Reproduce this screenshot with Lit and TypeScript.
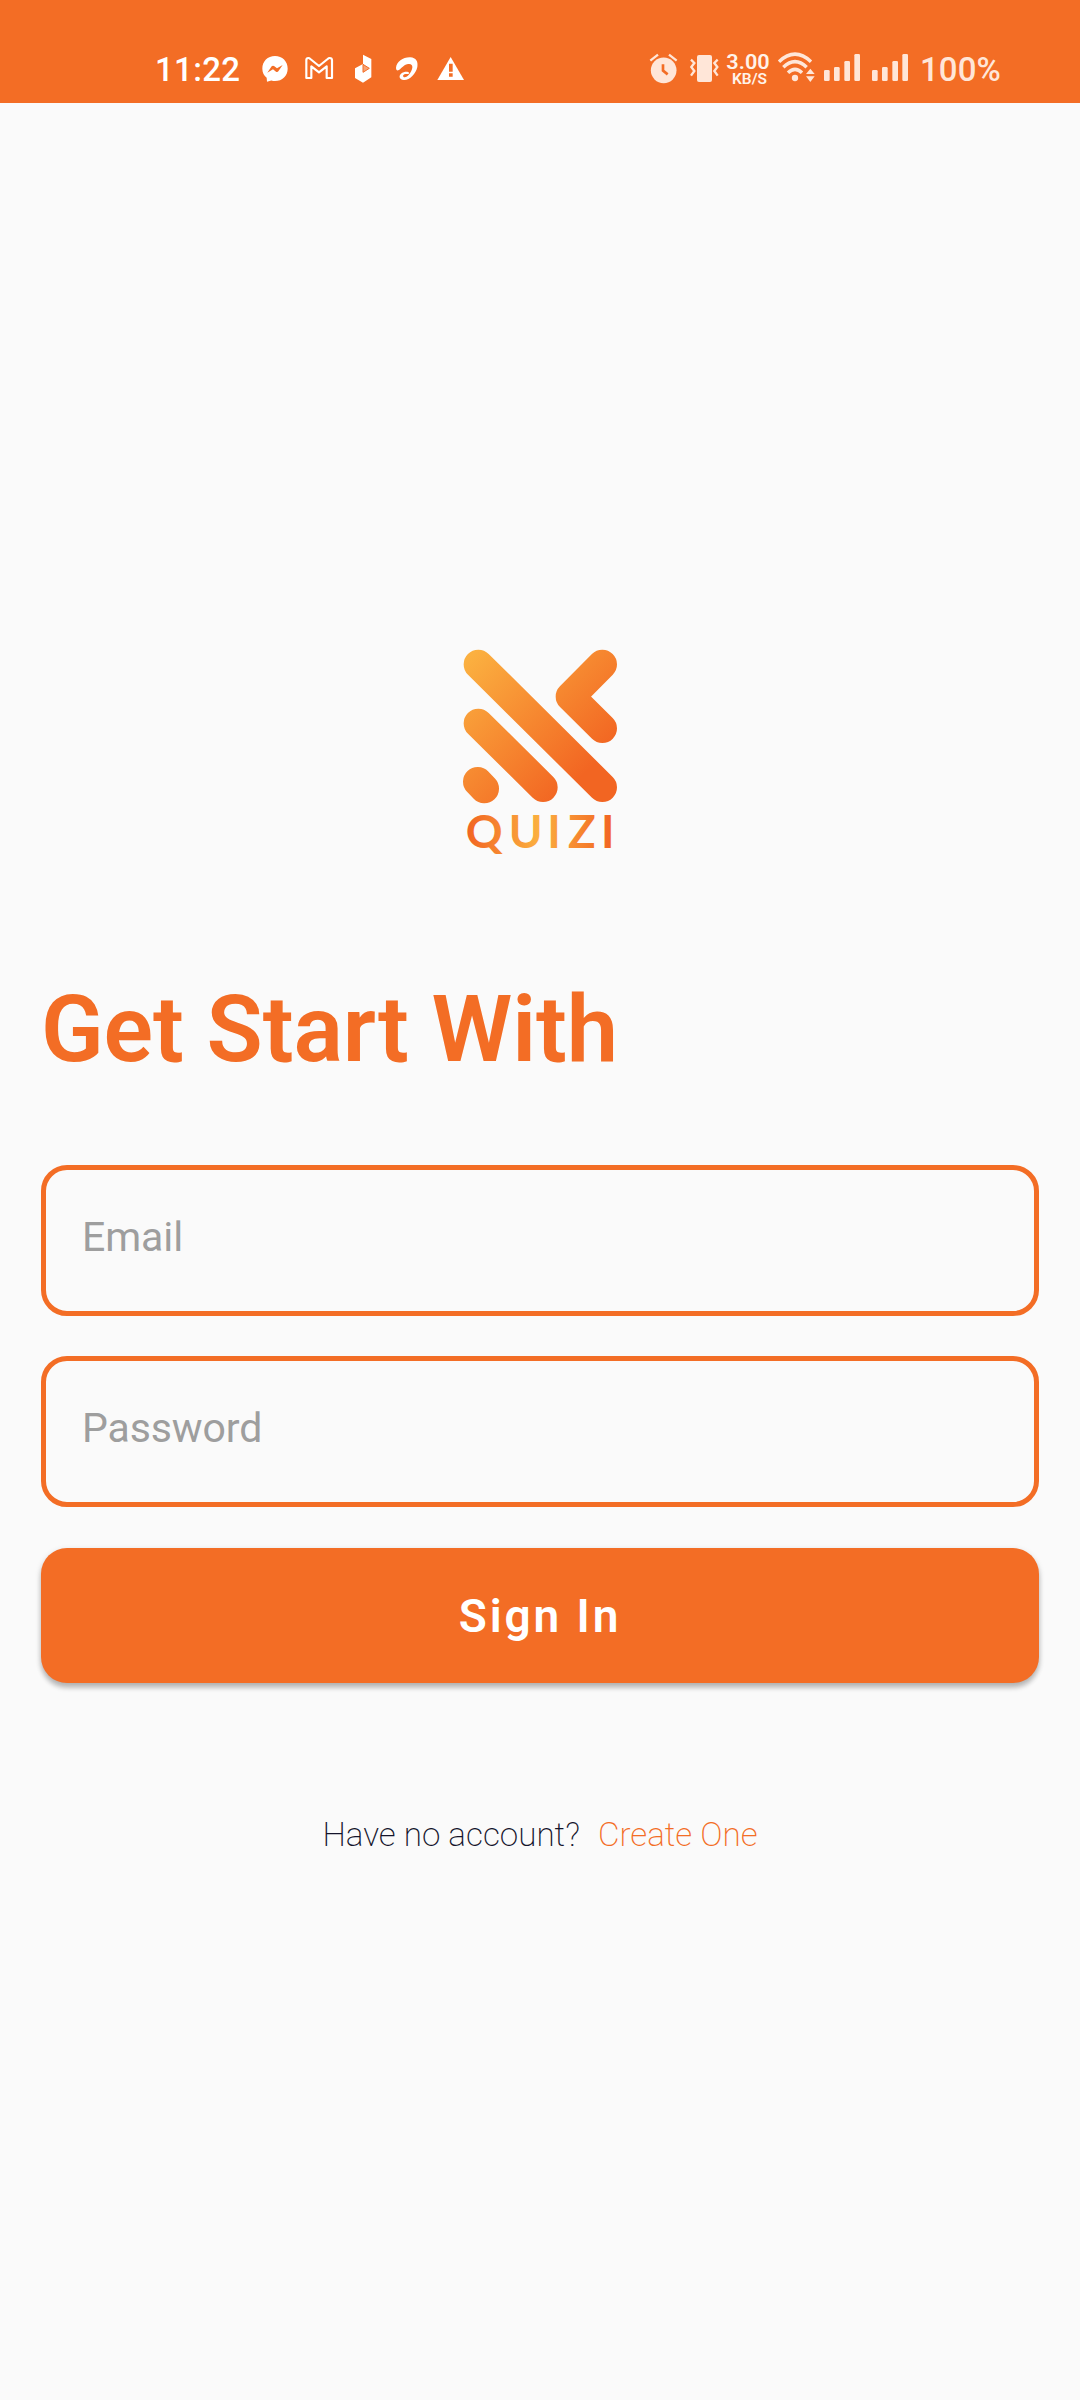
import { LitElement, html, css } from "lit";
import { customElement, property } from "lit/decorators.js";

@customElement("status-bar")
class StatusBar extends LitElement {
  static styles = css`
    :host {
      display: flex;
      justify-content: space-between;
      box-sizing: border-box;
      height: 103px;
      padding: 52px 79px 0 155px;
      background: #f36d25;
      color: #fff;
      font-family: Roboto, sans-serif;
    }
    .side { display: flex; align-items: flex-start; }
    .right { color: #ffe6d8; }
    svg { display: block; height: 32px; flex: none; fill: currentColor; overflow: visible; }
    .time, .battery { font-size: 33px; line-height: 36px; white-space: nowrap; }
    .time { width: 106px; font-weight: 500; letter-spacing: 0.35px; }
    .battery { width: 81px; margin-left: 11px; font-weight: 500; letter-spacing: 0.1px; }
    .messenger { width: 28px; }
    .gmail { width: 30px; margin-left: 15px; }
    .cube { width: 20px; margin-left: 19px; }
    .swirl { width: 24px; margin-left: 22px; }
    .warn { width: 28px; margin-left: 18px; }
    .alarm { width: 30px; }
    .vibrate { width: 29px; margin-left: 11px; }
    .speed { width: 44px; margin-left: 7px; color: #fff3ea; font-family: Roboto, sans-serif; font-weight: 600; }
    .wifi { width: 39px; margin-left: 7px; }
    .signal { width: 37px; margin-left: 8px; }
    .signal + .signal { margin-left: 11px; }
  `;

  private bars() {
    return html`<svg class="signal" viewBox="12 36 111 96">
      <rect x="12" y="90" width="17" height="33" rx="4" />
      <rect x="42" y="81" width="17" height="42" rx="4" />
      <rect x="73" y="63" width="17" height="60" rx="4" />
      <rect x="103" y="42" width="17" height="81" rx="4" />
    </svg>`;
  }

  render() {
    return html`
      <div class="side">
        <span class="time">11:22</span>
        <svg class="messenger" viewBox="363 36 84 96">
          <path fill-rule="evenodd" d="M405 48C383 48 367 64 367 86C367 98 372 107 380 113L381 125L394 121.500C398 123 401 123 405 123C427 123 443 107 443 86C443 64 427 48 405 48ZM382 98L395 79Q398 76 402 78L411 85L428 75L415 94Q412 98 408 95L399 88Z" />
        </svg>
        <svg class="gmail" viewBox="492 36 90 96">
          <path fill="none" stroke="currentColor" stroke-width="6.500" stroke-linejoin="round" d="M499 114V60Q499 54 505 54Q508 54 511 57L537 78L563 57Q566 54 569 54Q576 54 576 61V114H560V79L537 97L514 79V114Z" />
        </svg>
        <svg class="cube" viewBox="639 36 60 96">
          <path d="M669 44L694 57V112L669 128L645 114V85L669 72Z" />
          <path d="M669 73V97L688 85Z" fill="#f8a273" stroke="#f36d25" stroke-width="3" />
        </svg>
        <svg class="swirl" viewBox="765 36 72 96">
          <path d="M768 83C770 64 790 51 811 52C828 53 835 65 832 81C828 102 807 122 791 120C779 119 775 108 783 101C791 95 804 94 807 98C809 101 804 103 799 102C792 101 787 106 790 110C798 117 814 99 817 83C818 73 811 70 801 73C788 77 784 87 775 91C770 92 768 88 768 83Z" />
        </svg>
        <svg class="warn" viewBox="891 36 84 96">
          <path d="M932 51L972 120H892Z" />
          <path d="M927 71H938V95H927ZM927 100H938V110H927Z" fill="#f36d25" />
        </svg>
      </div>
      <div class="side right">
        <svg class="alarm" viewBox="27 36 90 96">
          <circle cx="71" cy="91" r="38.500" />
          <path d="M31 62L54 44M110 62L87 44" stroke="currentColor" stroke-width="7" />
          <path d="M69 73V92L83 103" fill="none" stroke="#f36d25" stroke-width="8" />
        </svg>
        <svg class="vibrate" viewBox="150 36 87 96">
          <rect x="171" y="45" width="45" height="81" rx="6" />
          <path d="M153 59L163 69L154 81L163 93L153 107M233 59L223 69L232 81L223 93L233 107" fill="none" stroke="currentColor" stroke-width="7" />
        </svg>
        <svg class="speed" viewBox="258 36 132 96">
          <text x="259" y="86" font-size="61" textLength="130" lengthAdjust="spacingAndGlyphs">3.00</text>
          <text x="276" y="132" font-size="45" textLength="105" lengthAdjust="spacingAndGlyphs">KB/S</text>
        </svg>
        <svg class="wifi" viewBox="411 36 117 96">
          <path d="M417 65Q465 20 513 65M430 82Q465 48 500 82M444 98Q465 78 486 98" fill="none" stroke="currentColor" stroke-width="10.500" />
          <circle cx="465" cy="114" r="9.500" />
          <path d="M511 86L524 102H498ZM498 109H524L511 126Z" />
        </svg>
        ${this.bars()}${this.bars()}
        <span class="battery">100%</span>
      </div>
    `;
  }
}

@customElement("quizi-logo")
class QuiziLogo extends LitElement {
  static styles = css`
    :host { display: block; width: 200px; height: 240px; }
    svg { display: block; width: 200px; height: 240px; }
    .marks { fill: none; stroke: url(#mark); stroke-width: 88; stroke-linecap: round; stroke-linejoin: round; }
    .name { fill: url(#word); font-family: Lato, sans-serif; font-size: 137px; font-weight: 700; }
  `;

  render() {
    return html`<svg viewBox="0 0 600 720">
      <defs>
        <linearGradient id="mark" gradientUnits="userSpaceOnUse" x1="85" y1="85" x2="432" y2="432">
          <stop offset="0" stop-color="#fbb040" />
          <stop offset="1" stop-color="#f26522" />
        </linearGradient>
        <linearGradient id="word" gradientUnits="userSpaceOnUse" x1="82" y1="0" x2="514" y2="0">
          <stop offset="0" stop-color="#f26522" />
          <stop offset="0.500" stop-color="#fbb040" />
          <stop offset="1" stop-color="#f26522" />
        </linearGradient>
      </defs>
      <path class="marks" d="M115 103L487 472M115 280L309 472M113 455L133 476M487 103L391 200L487 295" />
      <text class="name" y="654" x="77 206 322 384 483">QUIZI</text>
    </svg>`;
  }
}

@customElement("text-field")
class TextField extends LitElement {
  @property() hint = "";

  static styles = css`
    :host { display: block; }
    .box {
      display: flex;
      align-items: center;
      box-sizing: border-box;
      height: 151px;
      padding: 0 36px 7px;
      border: 5px solid #f36d25;
      border-radius: 26px;
      color: #9e9e9e;
      font: 400 41px/48px Roboto, sans-serif;
      letter-spacing: -0.1px;
    }
  `;

  render() {
    return html`<label class="box">${this.hint}</label>`;
  }
}

@customElement("app-root")
class AppRoot extends LitElement {
  static styles = css`
    :host {
      display: block;
      height: 2400px;
      background: #fafafa;
      font-family: Roboto, sans-serif;
      overflow: hidden;
    }
    .form {
      display: flex;
      flex-direction: column;
      padding: 527px 41px 0;
    }
    quizi-logo { align-self: center; }
    .title {
      margin: 105px 0 0;
      color: #f36d25;
      font-size: 92px;
      font-weight: 600;
      line-height: 110px;
      letter-spacing: -0.1px;
      white-space: nowrap;
    }
    .fields { display: grid; gap: 40px; margin-top: 80px; }
    .submit {
      height: 135px;
      margin-top: 41px;
      padding: 0;
      border: 0;
      border-radius: 26px;
      background: #f36d25;
      box-shadow: 0 5px 5px rgba(0, 0, 0, 0.2), 0 2px 6px rgba(0, 0, 0, 0.14);
      color: #fff;
      font: 600 46px/54px Roboto, sans-serif;
      letter-spacing: 2.9px;
    }
    .footer {
      display: flex;
      justify-content: center;
      gap: 18px;
      margin-top: 132px;
      font-size: 33.200px;
      font-weight: 200;
      line-height: 40px;
      color: #14142b;
      white-space: nowrap;
    }
    .link { color: #f36d25; }
  `;

  render() {
    return html`
      <status-bar></status-bar>
      <main class="form">
        <quizi-logo></quizi-logo>
        <h1 class="title">Get Start With</h1>
        <div class="fields">
          <text-field hint="Email"></text-field>
          <text-field hint="Password"></text-field>
        </div>
        <button class="submit">Sign In</button>
        <div class="footer"><span>Have no account?</span><span class="link">Create One</span></div>
      </main>
    `;
  }
}
